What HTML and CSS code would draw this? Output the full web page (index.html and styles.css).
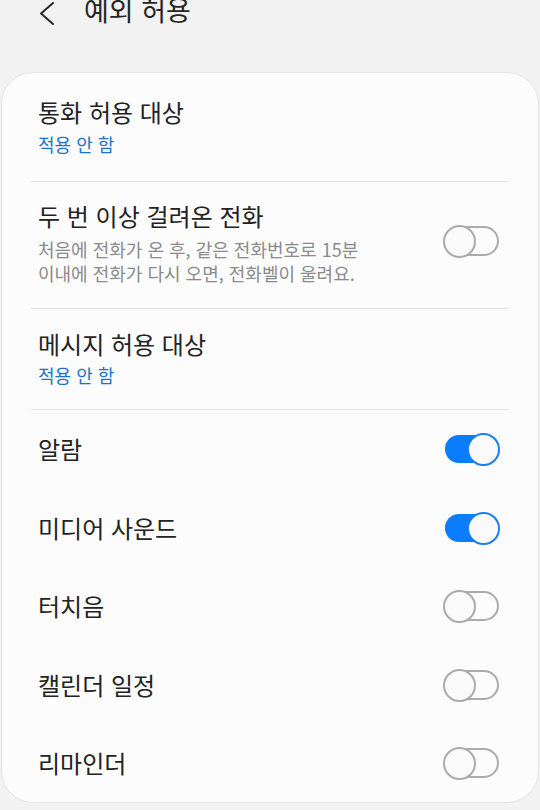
FILE: index.html
```html
<!DOCTYPE html>
<html lang="ko">
<head>
<meta charset="utf-8">
<link rel="stylesheet" href="styles.css">
</head>
<body>
<header class="appbar">
  <svg class="back" width="20" height="26" viewBox="0 0 20 26"><polyline points="15,2 3,12.5 15,23" fill="none" stroke="#2a2a2a" stroke-width="2" stroke-linecap="round" stroke-linejoin="round"/></svg>
  <h1 class="title">예외 허용</h1>
</header>
<main class="card">
  <div class="row text first">
    <div class="label">통화 허용 대상</div>
    <div class="sub">적용 안 함</div>
  </div>
  <div class="divider"></div>
  <div class="row text repeat">
    <div class="main">
      <div class="label">두 번 이상 걸려온 전화</div>
      <div class="desc">처음에 전화가 온 후, 같은 전화번호로 15분<br>이내에 전화가 다시 오면, 전화벨이 울려요.</div>
    </div>
    <span class="switch"></span>
  </div>
  <div class="divider"></div>
  <div class="row text msg">
    <div class="label">메시지 허용 대상</div>
    <div class="sub">적용 안 함</div>
  </div>
  <div class="divider"></div>
  <div class="row simple"><div class="label">알람</div><span class="switch on"></span></div>
  <div class="row simple"><div class="label">미디어 사운드</div><span class="switch on"></span></div>
  <div class="row simple"><div class="label">터치음</div><span class="switch"></span></div>
  <div class="row simple"><div class="label">캘린더 일정</div><span class="switch"></span></div>
  <div class="row simple"><div class="label">리마인더</div><span class="switch"></span></div>
</main>
</body>
</html>
```
FILE: styles.css
```css
* { box-sizing: border-box; }
html, body { margin: 0; padding: 0; }
body {
  background: #f2f2f2;
  font-family: "Noto Sans CJK KR", "Noto Sans", sans-serif;
  color: #222;
  width: 540px;
  height: 810px;
  overflow: hidden;
}
.appbar {
  display: flex;
  align-items: center;
  height: 36px;
  margin-top: -8px;
  margin-bottom: 44px;
  padding-left: 38px;
}
.back { display: block; margin-top: 7px; }
.title {
  margin: 0 0 0 26px;
  font-size: 27px;
  font-weight: 400;
  line-height: 36px;
  color: #252525;
}
.card {
  margin: 0 1px;
  background: #fcfcfc;
  border: 1px solid #e4e4e4;
  border-radius: 32px;
  padding-top: 4px;
  height: 731px;
}
.row {
  display: flex;
  margin: 0 29px;
  padding-left: 7px;
}
.row.text { flex-direction: column; }
.row.first { padding-top: 19px; padding-bottom: 24px; }
.row.repeat { flex-direction: row; align-items: center; justify-content: space-between; padding-top: 18px; padding-bottom: 23px; padding-right: 10px; }
.row.repeat .switch { margin-bottom: 4px; }
.row.msg { padding-top: 19px; padding-bottom: 21px; }
.row.simple {
  height: 78.5px;
  align-items: center;
  justify-content: space-between;
  padding-right: 10px;
}
.label {
  font-size: 24px;
  line-height: 32px;
  color: #222;
}
.sub {
  margin-top: 4px;
  font-size: 18px;
  line-height: 25px;
  color: #1a73c9;
}
.row.msg .sub { margin-top: 3px; }
.desc {
  margin-top: 5px;
  font-size: 18px;
  line-height: 24px;
  color: #8a8a8a;
}
.divider {
  height: 1px;
  background: #e3e3e3;
  margin: 0 29px;
}
.switch {
  position: relative;
  display: block;
  width: 55px;
  height: 30px;
  border: 2px solid #ababab;
  border-radius: 15px;
  flex: none;
}
.switch::after {
  content: "";
  position: absolute;
  left: -3px;
  top: -3px;
  width: 33px;
  height: 33px;
  box-sizing: border-box;
  border: 2px solid #ababab;
  border-radius: 50%;
  background: #fafafa;
}
.switch.on {
  background: #0a7cfc;
  border-color: #0a7cfc;
  height: 28px;
  width: 54px;
}
.switch.on::after {
  left: auto;
  right: -3px;
  top: -4px;
  width: 33px;
  height: 33px;
  border-color: #1a7ef0;
}
```
